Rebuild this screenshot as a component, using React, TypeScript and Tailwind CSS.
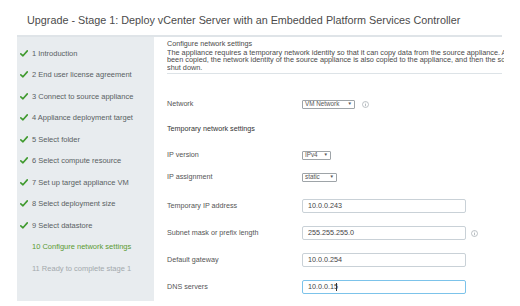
import React from "react";

const steps = [
  { n: "1 Introduction", s: "done" },
  { n: "2 End user license agreement", s: "done" },
  { n: "3 Connect to source appliance", s: "done" },
  { n: "4 Appliance deployment target", s: "done" },
  { n: "5 Select folder", s: "done" },
  { n: "6 Select compute resource", s: "done" },
  { n: "7 Set up target appliance VM", s: "done" },
  { n: "8 Select deployment size", s: "done" },
  { n: "9 Select datastore", s: "done" },
  { n: "10 Configure network settings", s: "active" },
  { n: "11 Ready to complete stage 1", s: "todo" },
];

function Check() {
  return (
    <svg width="8" height="7" viewBox="0 0 8 7" className="shrink-0">
      <path d="M0.8 3.8 L3 5.8 L7.3 0.9" fill="none" stroke="#3f9a2e" strokeWidth="1.6" strokeLinecap="round" strokeLinejoin="round" />
    </svg>
  );
}

function Info() {
  return (
    <svg width="7" height="7" viewBox="0 0 14 14" className="shrink-0">
      <circle cx="7" cy="7" r="6" fill="none" stroke="#9aa3a9" strokeWidth="1.3" />
      <rect x="6.3" y="6" width="1.4" height="4.5" fill="#9aa3a9" />
      <rect x="6.3" y="3.4" width="1.4" height="1.4" fill="#9aa3a9" />
    </svg>
  );
}

function Select({ label, w }: { label: string; w: string }) {
  return (
    <div className={`flex h-[9px] items-center justify-between rounded-[1px] border border-[#9ea4a8] bg-white px-[2px] text-[6.3px] leading-none text-[#555] ${w}`}>
      <span>{label}</span>
      <span className="text-[4.5px]">▼</span>
    </div>
  );
}

function Input({ value, focused }: { value: string; focused?: boolean }) {
  return (
    <div
      className={`flex h-[14px] w-[164px] items-center rounded-[2px] bg-white pl-[5px] text-[7.2px] leading-none text-[#444] ${
        focused ? "border-[1.5px] border-[#7cc3ea]" : "border border-[#c9d1d7]"
      }`}
    >
      {value}
      {focused && <span className="ml-[-1.5px] inline-block h-[8px] w-[1px] bg-[#333]" />}
    </div>
  );
}

export default function App() {
  const label = "w-[135px] shrink-0 text-[7.2px] leading-none text-[#555]";
  return (
    <div
      className="relative h-[306px] w-[520px] overflow-hidden bg-white"
      style={{ fontFamily: '"Liberation Sans", Arial, sans-serif' }}
    >
      <div className="h-[35px] pl-[27px] pt-[14px] text-[10.8px] leading-[13px] text-[#4b4b4b]">
        Upgrade - Stage 1: Deploy vCenter Server with an Embedded Platform Services Controller
      </div>
      <div className="ml-[17px] flex w-[485px] border-t-2 border-[#dfe4e8]">
        <div className="h-[264px] w-[137px] shrink-0 bg-[#e8ecef] pt-[5.5px]">
          {steps.map((st) => (
            <div key={st.n} className="flex h-[21.5px] items-center pl-[3px]">
              <div className="w-[12px]">{st.s === "done" && <Check />}</div>
              <span
                className={`text-[7.5px] leading-none ${
                  st.s === "active" ? "text-[#5b9a32]" : st.s === "todo" ? "text-[#a3a9ad]" : "text-[#595f63]"
                }`}
              >
                {st.n}
              </span>
            </div>
          ))}
        </div>
        <div className="min-w-0 flex-1 pl-[13px] pt-[3px]">
          <div className="text-[7.2px] leading-[8.5px] text-[#4a4a4a]">Configure network settings</div>
          <div className="mr-[-2px] overflow-hidden whitespace-nowrap text-[7.3px] leading-[7.5px] text-[#4a4a4a]">
            <div>The appliance requires a temporary network identity so that it can copy data from the source appliance. After the data has</div>
            <div>been copied, the network identity of the source appliance is also copied to the appliance, and then the source appliance is</div>
            <div>shut down.</div>
          </div>
          <div className="mt-[2px] h-px w-full bg-[#dde3e7]" />

          <div className="mt-[23px] flex h-[14px] items-center">
            <div className={label}>Network</div>
            <Select label="VM Network" w="w-[53px]" />
            <div className="ml-[7px]">
              <Info />
            </div>
          </div>
          <div className="mt-[11px] flex h-[14px] items-center">
            <div className="text-[7.2px] leading-none text-[#333]">Temporary network settings</div>
          </div>
          <div className="mt-[12px] flex h-[14px] items-center">
            <div className={label}>IP version</div>
            <Select label="IPv4" w="w-[29px]" />
          </div>
          <div className="mt-[8px] flex h-[14px] items-center">
            <div className={label}>IP assignment</div>
            <Select label="static" w="w-[35px]" />
          </div>
          <div className="mt-[15px] flex h-[14px] items-center">
            <div className={label}>Temporary IP address</div>
            <Input value="10.0.0.243" />
          </div>
          <div className="mt-[13px] flex h-[14px] items-center">
            <div className={label}>Subnet mask or prefix length</div>
            <Input value="255.255.255.0" />
            <div className="ml-[5px]">
              <Info />
            </div>
          </div>
          <div className="mt-[13px] flex h-[14px] items-center">
            <div className={label}>Default gateway</div>
            <Input value="10.0.0.254" />
          </div>
          <div className="mt-[13px] flex h-[14px] items-center">
            <div className={label}>DNS servers</div>
            <Input value="10.0.0.15" focused />
          </div>
        </div>
      </div>
    </div>
  );
}
